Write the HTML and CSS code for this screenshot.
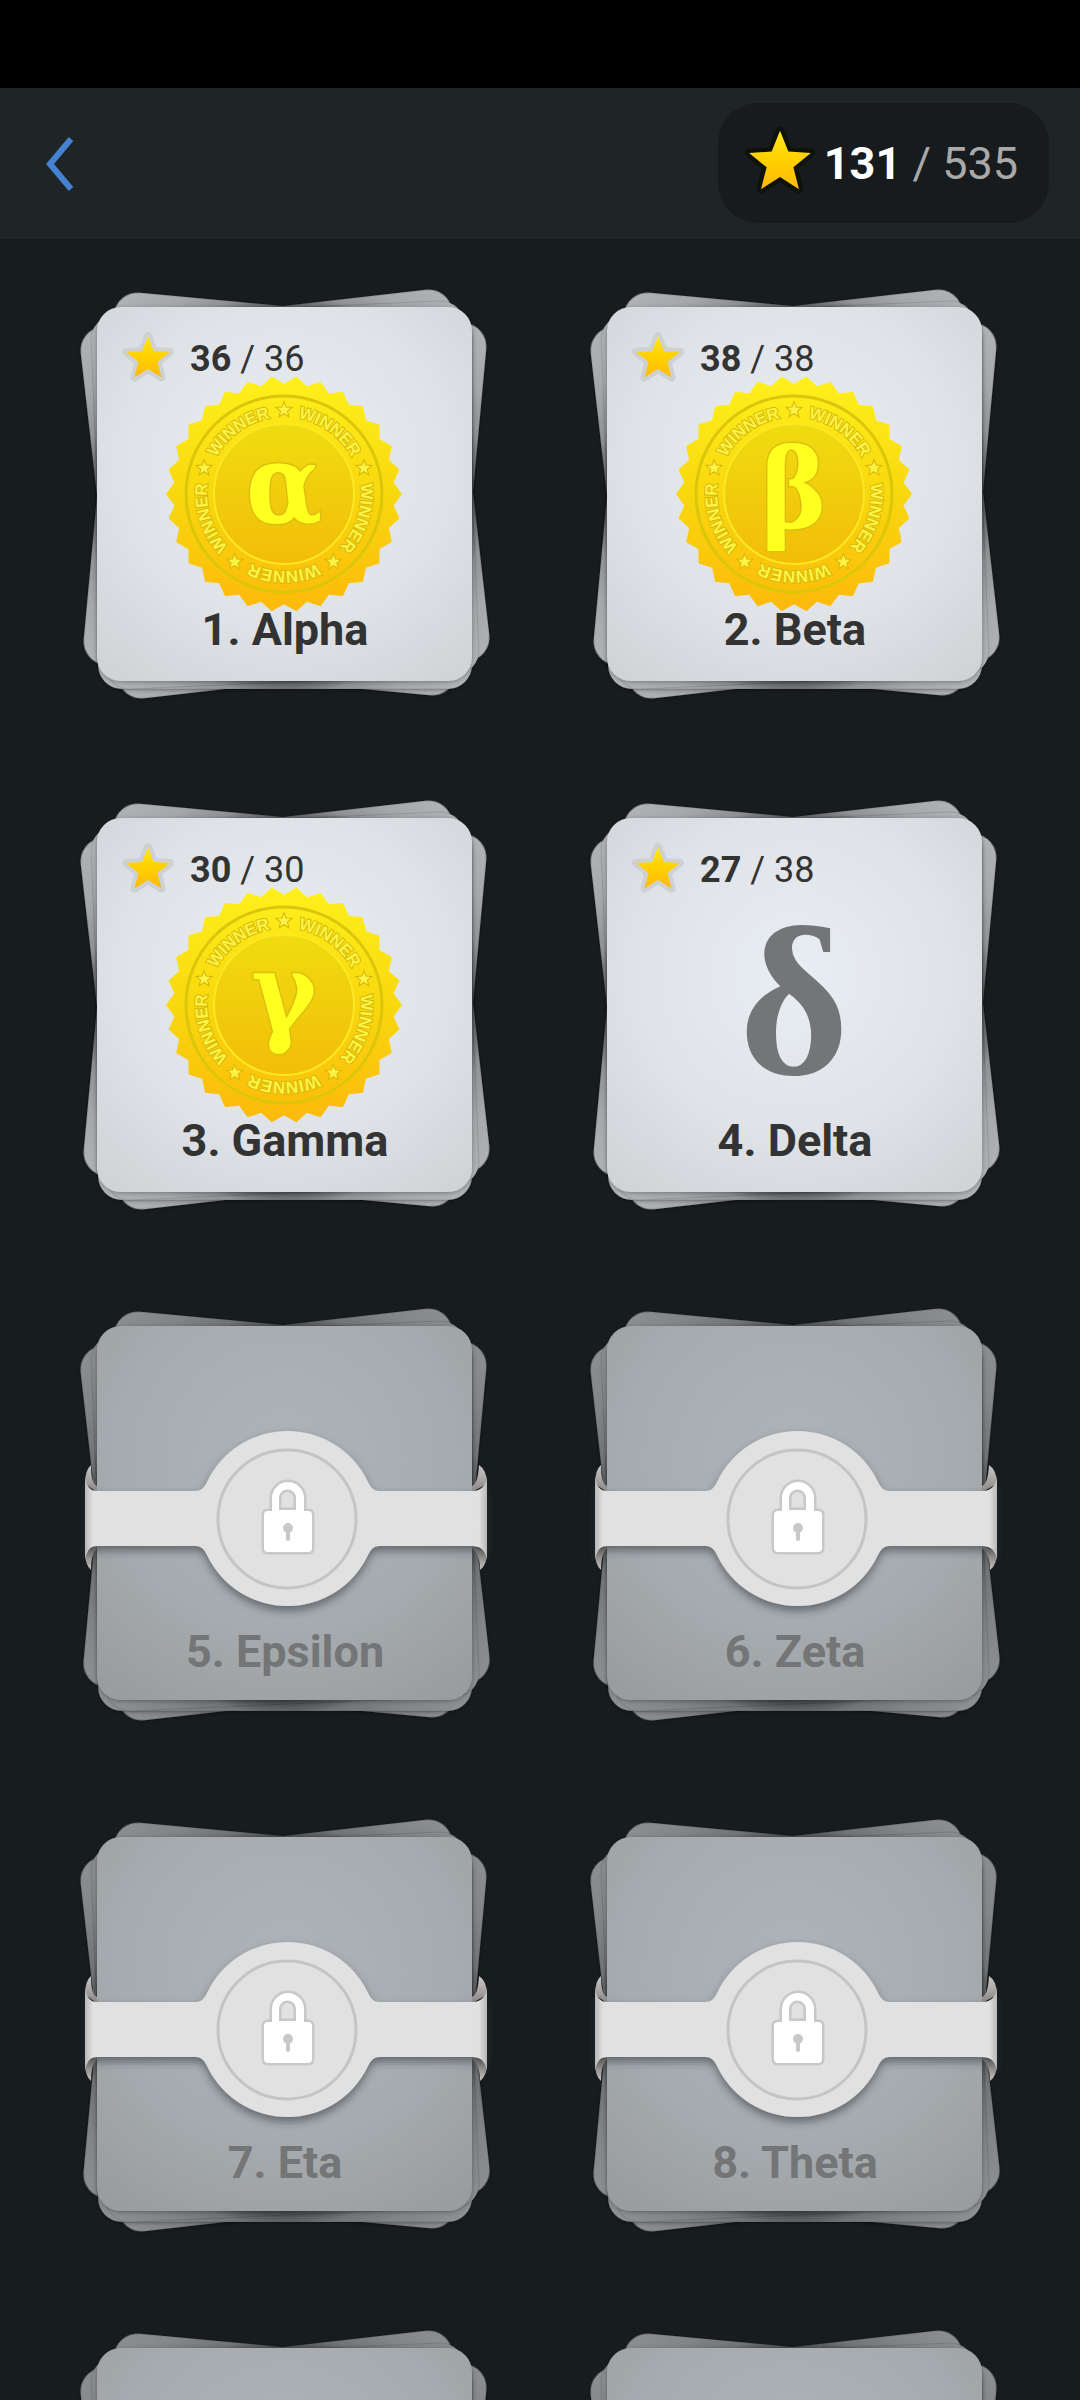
FILE: index.html
```html
<!DOCTYPE html>
<html lang="en">
<head>
<meta charset="utf-8">
<meta name="viewport" content="width=device-width, initial-scale=1">
<title>Level packs</title>
<link rel="stylesheet" href="styles.css">
</head>
<body>
<svg class="defs" aria-hidden="true">
  <defs>
    <linearGradient id="gold" x1="0" y1="0" x2="0" y2="1">
      <stop offset="0" stop-color="#fff01c"/><stop offset=".5" stop-color="#f8d80e"/><stop offset="1" stop-color="#fdb90a"/>
    </linearGradient>
    <linearGradient id="disc" x1="0" y1="0" x2="0" y2="1">
      <stop offset="0" stop-color="#f0dc10"/><stop offset="1" stop-color="#f2bd08"/>
    </linearGradient>
    <linearGradient id="starFill" x1="0" y1="0" x2="0" y2="1">
      <stop offset="0" stop-color="#ffe81e"/><stop offset=".5" stop-color="#ffd000"/><stop offset="1" stop-color="#ffb90a"/>
    </linearGradient>
    <radialGradient id="paper" cx=".5" cy=".42" r=".72">
      <stop offset="0" stop-color="#e9eef2"/><stop offset=".6" stop-color="#dfe3e8"/><stop offset="1" stop-color="#d0d4d7"/>
    </radialGradient>
    <radialGradient id="paperDim" cx=".5" cy=".36" r=".76">
      <stop offset="0" stop-color="#adb4b9"/><stop offset=".6" stop-color="#a6abaf"/><stop offset="1" stop-color="#999d9f"/>
    </radialGradient>
    <radialGradient id="under" gradientUnits="userSpaceOnUse" cx="225" cy="225" r="270">
      <stop offset=".69" stop-color="#56595b"/><stop offset=".74" stop-color="#8f9294"/><stop offset=".82" stop-color="#a5a8aa"/><stop offset=".95" stop-color="#b0b3b6"/>
    </radialGradient>
    <radialGradient id="underDim" gradientUnits="userSpaceOnUse" cx="225" cy="225" r="270">
      <stop offset=".69" stop-color="#44484a"/><stop offset=".74" stop-color="#707476"/><stop offset=".82" stop-color="#808487"/><stop offset=".95" stop-color="#8b8f92"/>
    </radialGradient>
    <linearGradient id="foldUp" x1="0" y1="0" x2="0" y2="1">
      <stop offset="0" stop-color="#c9c6c5"/><stop offset="1" stop-color="#8f8a88"/>
    </linearGradient>
    <linearGradient id="foldDown" x1="0" y1="0" x2="0" y2="1">
      <stop offset="0" stop-color="#77736f"/><stop offset="1" stop-color="#c4bfbc"/>
    </linearGradient>
    <linearGradient id="edge" x1="0" x2="1" y1="0" y2="0">
      <stop offset="0" stop-color="#b8b8b8"/><stop offset=".02" stop-color="#e1e1e1"/><stop offset=".98" stop-color="#e1e1e1"/><stop offset="1" stop-color="#b8b8b8"/>
    </linearGradient>
    <filter id="soft" x="-10%" y="-10%" width="120%" height="120%">
      <feDropShadow dx="0" dy="1" stdDeviation="2" flood-color="#000" flood-opacity=".3"/>
    </filter>
    <filter id="band" x="-10%" y="-10%" width="120%" height="130%">
      <feDropShadow dx="0" dy="5" stdDeviation="4" flood-color="#30363a" flood-opacity=".55"/>
    </filter>
    <path id="star" d="M0-23 5.900-8.100 21.900-7.100 9.500 3.100 13.500 18.600 0 10-13.500 18.600-9.500 3.100-21.900-7.100-5.900-8.100Z"/>
    <polygon id="penta" points="118,0 36.500,112.200 -95.500,69.400 -95.500,-69.400 36.500,-112.200"/>
    <clipPath id="teeth">
      <use href="#penta"/><use href="#penta" transform="rotate(12)"/><use href="#penta" transform="rotate(24)"/>
      <use href="#penta" transform="rotate(36)"/><use href="#penta" transform="rotate(48)"/><use href="#penta" transform="rotate(60)"/>
    </clipPath>
    <path id="arc" d="M-77 0A77 77 0 0 1 77 0"/>
  </defs>
  <symbol id="stack" viewBox="0 0 450 450">
    <g fill="url(#under)" stroke="#000" stroke-opacity=".12">
      <rect x="38" y="37" width="374" height="374" rx="24" transform="rotate(5.300 225 224)" filter="url(#soft)"/>
      <rect x="38" y="37" width="374" height="374" rx="24" transform="rotate(-6.500 225 224)" filter="url(#soft)"/>
      <rect x="38" y="45" width="374" height="374" rx="24" filter="url(#soft)"/>
      <rect x="38" y="38" width="374" height="374" rx="24" transform="rotate(-2.500 225 225)"/>
    </g>
    <rect x="37" y="37" width="375" height="374" rx="24" fill="url(#paper)" filter="url(#soft)"/>
  </symbol>
  <symbol id="stackDim" viewBox="0 2 450 450">
    <g fill="url(#underDim)" stroke="#000" stroke-opacity=".12">
      <rect x="38" y="36" width="374" height="377" rx="24" transform="rotate(5.300 225 224)" filter="url(#soft)"/>
      <rect x="38" y="36" width="374" height="377" rx="24" transform="rotate(-6.500 225 224)" filter="url(#soft)"/>
      <rect x="38" y="45" width="374" height="376" rx="24" filter="url(#soft)"/>
      <rect x="38" y="38" width="374" height="376" rx="24" transform="rotate(-2.500 225 225)"/>
    </g>
    <rect x="37" y="36" width="375" height="374" rx="24" fill="url(#paperDim)" filter="url(#soft)"/>
    <path d="M31 175Q25 180 25 194L37 202 37 196Q31 194 31 175ZM419 175Q427 180 427 194L412 202 412 196Q418 194 419 175Z" fill="url(#foldUp)"/>
    <path d="M25 262Q25 275 31 280 31 264 37 258L37 255ZM427 262Q427 275 420 280 420 264 412 258L412 255Z" fill="url(#foldDown)"/>
    <path d="M25 187Q27 201 37 201H136Q143 201 147 192A89 89 0 0 1 308 192Q312 201 319 201H412Q425 201 427 187V270Q425 256 412 256H319Q312 256 308 265A89 89 0 0 1 147 265Q143 256 136 256H37Q27 256 25 270Z" fill="url(#edge)" filter="url(#band)"/>
    <circle cx="227" cy="229" r="69" fill="none" stroke="#c4c4c4" stroke-width="3"/>
    <path d="M212 221V208A16 16 0 0 1 244 208V221H248Q252 221 252 225V258Q252 262 248 262H208Q204 262 204 258V225Q204 221 208 221ZM219 220H236V208A8.500 8.500 0 0 0 219 208Z" fill="#fff" fill-rule="evenodd" stroke="#c8c8c8" stroke-width="5" stroke-linejoin="round" paint-order="stroke"/>
    <path d="M228 238V249" stroke="#c8c8c8" stroke-width="4" stroke-linecap="round"/>
    <circle cx="228" cy="238" r="5" fill="#c8c8c8"/>
  </symbol>
  <symbol id="medal" viewBox="-118 -118 236 236">
    <circle r="118" fill="url(#gold)" clip-path="url(#teeth)"/>
    <circle r="98" fill="none" stroke="#dcc60c" stroke-width="3"/>
    <circle r="70" fill="url(#disc)" stroke="#fbe724" stroke-width="2"/>
    <g class="ring-stars">
      <use href="#star" transform="translate(0 -84) scale(.3)"/>
      <use href="#star" transform="rotate(72) translate(0 -84) scale(.3)"/>
      <use href="#star" transform="rotate(144) translate(0 -84) scale(.3)"/>
      <use href="#star" transform="rotate(216) translate(0 -84) scale(.3)"/>
      <use href="#star" transform="rotate(288) translate(0 -84) scale(.3)"/>
    </g>
  </symbol>
</svg>

<div class="app">
  <div class="status"></div>
  <header class="bar">
    <button class="back" aria-label="Back">
      <svg viewBox="0 0 34 56" width="34" height="56"><path d="M28 4 7 29 28 54" fill="none" stroke="#4582d2" stroke-width="6"/></svg>
    </button>
    <div class="total">
      <svg class="total-star" viewBox="-27 -27 54 54"><use href="#star"/></svg>
      <p><b>131</b> / 535</p>
    </div>
  </header>

  <main class="packs">
    <button class="deck">
      <svg class="layer"><use href="#stack"/></svg>
      <svg class="emblem" viewBox="-117 -117 236 236">
        <use href="#medal" x="-118" y="-118" width="236" height="236"/>
        <g class="ring">
          <text transform="rotate(36)"><textPath href="#arc" startOffset="50%">WINNER</textPath></text>
          <text transform="rotate(108)"><textPath href="#arc" startOffset="50%">WINNER</textPath></text>
          <text transform="rotate(180)"><textPath href="#arc" startOffset="50%">WINNER</textPath></text>
          <text transform="rotate(252)"><textPath href="#arc" startOffset="50%">WINNER</textPath></text>
          <text transform="rotate(324)"><textPath href="#arc" startOffset="50%">WINNER</textPath></text>
        </g>
        <text class="glyph" y="28">α</text>
      </svg>
      <span class="face">
        <span class="score"><svg class="mini" viewBox="-27 -27 54 54"><use href="#star"/></svg><span><b>36</b> / 36</span></span>
        <span class="name">1. Alpha</span>
      </span>
    </button>
    <button class="deck">
      <svg class="layer"><use href="#stack"/></svg>
      <svg class="emblem" viewBox="-117 -117 236 236">
        <use href="#medal" x="-118" y="-118" width="236" height="236"/>
        <g class="ring">
          <text transform="rotate(36)"><textPath href="#arc" startOffset="50%">WINNER</textPath></text>
          <text transform="rotate(108)"><textPath href="#arc" startOffset="50%">WINNER</textPath></text>
          <text transform="rotate(180)"><textPath href="#arc" startOffset="50%">WINNER</textPath></text>
          <text transform="rotate(252)"><textPath href="#arc" startOffset="50%">WINNER</textPath></text>
          <text transform="rotate(324)"><textPath href="#arc" startOffset="50%">WINNER</textPath></text>
        </g>
        <text class="glyph" y="34">β</text>
      </svg>
      <span class="face">
        <span class="score"><svg class="mini" viewBox="-27 -27 54 54"><use href="#star"/></svg><span><b>38</b> / 38</span></span>
        <span class="name">2. Beta</span>
      </span>
    </button>
    <button class="deck">
      <svg class="layer"><use href="#stack"/></svg>
      <svg class="emblem" viewBox="-117 -117 236 236">
        <use href="#medal" x="-118" y="-118" width="236" height="236"/>
        <g class="ring">
          <text transform="rotate(36)"><textPath href="#arc" startOffset="50%">WINNER</textPath></text>
          <text transform="rotate(108)"><textPath href="#arc" startOffset="50%">WINNER</textPath></text>
          <text transform="rotate(180)"><textPath href="#arc" startOffset="50%">WINNER</textPath></text>
          <text transform="rotate(252)"><textPath href="#arc" startOffset="50%">WINNER</textPath></text>
          <text transform="rotate(324)"><textPath href="#arc" startOffset="50%">WINNER</textPath></text>
        </g>
        <text class="glyph" y="26">γ</text>
      </svg>
      <span class="face">
        <span class="score"><svg class="mini" viewBox="-27 -27 54 54"><use href="#star"/></svg><span><b>30</b> / 30</span></span>
        <span class="name">3. Gamma</span>
      </span>
    </button>
    <button class="deck">
      <svg class="layer"><use href="#stack"/></svg>
      <svg class="emblem" viewBox="-117 -117 236 236"><text class="glyph open" y="68">δ</text></svg>
      <span class="face">
        <span class="score"><svg class="mini" viewBox="-27 -27 54 54"><use href="#star"/></svg><span><b>27</b> / 38</span></span>
        <span class="name">4. Delta</span>
      </span>
    </button>
    <button class="deck" disabled>
      <svg class="layer"><use href="#stackDim"/></svg>
      <span class="face"><span class="name">5. Epsilon</span></span>
    </button>
    <button class="deck" disabled>
      <svg class="layer"><use href="#stackDim"/></svg>
      <span class="face"><span class="name">6. Zeta</span></span>
    </button>
    <button class="deck" disabled>
      <svg class="layer"><use href="#stackDim"/></svg>
      <span class="face"><span class="name">7. Eta</span></span>
    </button>
    <button class="deck" disabled>
      <svg class="layer"><use href="#stackDim"/></svg>
      <span class="face"><span class="name">8. Theta</span></span>
    </button>
    <button class="deck" disabled>
      <svg class="layer"><use href="#stackDim"/></svg>
    </button>
    <button class="deck" disabled>
      <svg class="layer"><use href="#stackDim"/></svg>
    </button>
  </main>
</div>
</body>
</html>
```
FILE: styles.css
```css
* { box-sizing: border-box; }

body {
  margin: 0;
  background: #171c1f;
  color: #333;
  font-family: Roboto, "Liberation Sans", sans-serif;
}

button {
  padding: 0;
  border: 0;
  background: none;
  color: inherit;
  font: inherit;
}

p { margin: 0; }
b { font-weight: 700; }

.defs {
  display: block;
  width: 0;
  height: 0;
}

.app {
  display: flex;
  flex-direction: column;
  height: 100vh;
  overflow: hidden;
}

.status {
  flex: none;
  height: 88px;
  background: #000;
}

.bar {
  flex: none;
  display: flex;
  align-items: center;
  justify-content: space-between;
  padding: 15px 31px 16px 43px;
  background: #1f2427;
}

.back { display: flex; }

.total {
  display: flex;
  align-items: center;
  gap: 6px;
  height: 120px;
  padding: 0 31px 0 24px;
  border-radius: 40px;
  background: #171b1d;
  color: #a9a9a9;
  font-size: 45px;
}

.total b { color: #fff; }

.total-star {
  width: 76px;
  height: 76px;
  fill: url(#starFill);
  stroke: #0f1209;
  stroke-width: 6px;
  stroke-linejoin: round;
  paint-order: stroke;
}

.packs {
  flex: 1;
  display: grid;
  grid-template-columns: 1fr 1fr;
  grid-auto-rows: 511px;
  padding: 0 30px;
  overflow: hidden auto;
  scrollbar-width: none;
}

.deck {
  display: grid;
  place-items: center;
  place-content: center;
  grid-template-columns: 450px;
  grid-template-rows: 450px;
}

.deck > * { grid-area: 1 / 1; }

.layer {
  width: 450px;
  height: 450px;
}

.emblem {
  width: 236px;
  height: 236px;
  overflow: visible;
}

.ring {
  fill: #fdf346;
  stroke: #d6b80a;
  stroke-width: 2px;
  paint-order: stroke;
  font: 700 17px "Liberation Sans", sans-serif;
  text-anchor: middle;
}

.ring-stars {
  fill: #fdf346;
  stroke: #d6b80a;
  stroke-width: 7px;
  paint-order: stroke;
}

.glyph {
  fill: #ffff20;
  stroke: #dcc010;
  stroke-width: 3px;
  paint-order: stroke;
  font: 700 110px "DejaVu Serif Condensed", "DejaVu Serif", serif;
  text-anchor: middle;
}

.glyph.open {
  fill: #737678;
  stroke: none;
  font: 700 212px "Liberation Serif", serif;
}

.face {
  display: flex;
  flex-direction: column;
  justify-content: flex-end;
  align-self: stretch;
  justify-self: stretch;
  padding: 62px 61px 65px;
}

.score {
  display: flex;
  align-items: center;
  gap: 15px;
  margin-bottom: auto;
  font-size: 36px;
}

.mini {
  width: 54px;
  height: 54px;
  fill: url(#starFill);
  stroke: #cdd1d4;
  stroke-width: 8px;
  stroke-linejoin: round;
  paint-order: stroke;
}

.name {
  font-size: 45px;
  line-height: 50px;
  font-weight: 700;
  text-align: center;
}

.deck:disabled { color: #737576; }
```
